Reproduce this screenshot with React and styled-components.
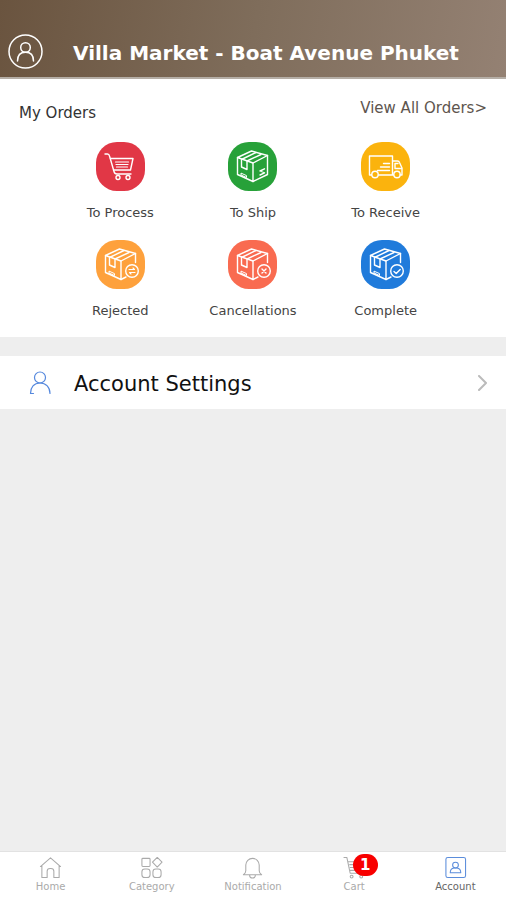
import styled, { createGlobalStyle } from "styled-components";

const GlobalStyle = createGlobalStyle`
  * {
    box-sizing: border-box;
  }

  body {
    margin: 0;
    background-color: #eee;
    font-family: "DejaVu Sans", Verdana, sans-serif;
  }

  button {
    font-family: inherit;
    border: none;
    background: none;
    padding: 0;
    cursor: pointer;
  }

  a {
    text-decoration: none;
  }
`;

const Page = styled.div`
  display: flex;
  flex-direction: column;
  min-height: 100vh;
`;

const Header = styled.header`
  display: flex;
  align-items: center;
  gap: 30px;
  padding: 34px 8px 8px;
  border-bottom: 2px solid #b5aea6;
  background: linear-gradient(100deg, #6a543f, #7f6d5b 50%, #948173);
`;

const Avatar = styled.span`
  display: flex;
  color: #fff;
`;

const Title = styled.h1`
  margin: 0;
  padding-top: 2px;
  font-size: 20px;
  line-height: 24px;
  white-space: nowrap;
  color: #fff;
`;

const Orders = styled.section`
  padding: 20px 19px 17px;
  background-color: #fff;
`;

const OrdersHeader = styled.div`
  display: flex;
  justify-content: space-between;
  align-items: flex-start;
  margin-bottom: 19px;
`;

const OrdersTitle = styled.h2`
  margin: 0;
  padding-top: 5px;
  font-size: 15px;
  font-weight: normal;
  line-height: 19px;
  color: #333;
`;

const OrdersLink = styled.a`
  font-size: 15px;
  line-height: 19px;
  color: #5e554e;
`;

const OrderGrid = styled.div`
  display: grid;
  grid-template-columns: repeat(3, 1fr);
  row-gap: 18px;
  padding: 0 35px;
`;

const OrderButton = styled.button`
  display: flex;
  flex-direction: column;
  align-items: center;
  gap: 13px;
  font-size: 13px;
  line-height: 18px;
  color: #444;
`;

const OrderIcon = styled.span`
  display: flex;
  justify-content: center;
  align-items: center;
  width: 49px;
  height: 49px;
  border-radius: 21px;
  background-color: ${(props) => props.$color};
`;

const SettingsRow = styled.button`
  display: flex;
  align-items: center;
  width: 100%;
  margin-top: 19px;
  padding: 12px 16px 12px 28px;
  background-color: #fff;
`;

const SettingsLabel = styled.span`
  flex: 1;
  margin-left: 22px;
  padding-top: 3px;
  font-size: 21px;
  line-height: 26px;
  text-align: left;
  color: #111;
`;

const NavBar = styled.nav`
  display: grid;
  grid-template-columns: repeat(5, 1fr);
  margin-top: auto;
  padding: 4px 0 6px;
  border-top: 1px solid #e2e2e2;
  background-color: #fff;
`;

const NavLink = styled.a`
  display: flex;
  flex-direction: column;
  align-items: center;
  gap: 1px;
  font-size: 10px;
  line-height: 14px;
  color: ${(props) => (props.$active ? "#666" : "#aaa")};
`;

const NavIcon = styled.span`
  position: relative;
  display: flex;
  color: ${(props) => (props.$active ? "#5b8ddb" : "#aaa")};
`;

const Badge = styled.span`
  position: absolute;
  top: -2px;
  left: 10px;
  width: 25px;
  border-radius: 11px;
  background-color: #f80000;
  color: #fff;
  font-size: 15px;
  font-weight: bold;
  line-height: 22px;
  text-align: center;
`;

function Icon({ size, box = size, stroke = 1, children }) {
  return (
    <svg
      width={size}
      height={size}
      viewBox={`0 0 ${box} ${box}`}
      fill="none"
      stroke="currentColor"
      strokeWidth={stroke}
      strokeLinecap="round"
      strokeLinejoin="round"
      aria-hidden="true"
    >
      {children}
    </svg>
  );
}

function OrderDrawing({ children }) {
  return (
    <Icon size={49} stroke={1.4}>
      <g stroke="#fff">{children}</g>
    </Icon>
  );
}

function CartDrawing() {
  return (
    <OrderDrawing>
      <path d="M9 12h2.500q1.500 0 2 2l4.500 15.500q.5 2.500 3 2.500h14" />
      <path d="M14.500 16.500h22.500l-2.500 11.500h-17" />
      <path d="M19.500 20h13M20 22.500h12M20.500 25h11" strokeWidth="1.200" />
      <circle cx="22" cy="35.500" r="2" />
      <circle cx="32" cy="35.500" r="2" />
    </OrderDrawing>
  );
}

function BoxDrawing({ mark, children }) {
  return (
    <OrderDrawing>
      <path d="M9.500 15.500l14-6.500 16 4.500-14.500 7.500z" />
      <path d="M9.500 15.500v17l15.500 7V21" />
      {mark ? (
        <path d="M39.500 13.500v9M25 39.500l5-2.500" />
      ) : (
        <path d="M39.500 13.500v19L25 39.500" />
      )}
      <path d="M13.500 17.500l14.500-7M19 19l14-6.500M13.500 17.500v7.500l5.500 2.500v-8.500" />
      <path d="M13 31.500v1.500l5.500 2.500v-1.500z" strokeWidth="1" />
      {mark && <circle cx="36" cy="31" r="6.300" />}
      {children}
    </OrderDrawing>
  );
}

function TruckDrawing() {
  return (
    <OrderDrawing>
      <path d="M10.500 33H8.500V14h23v19H17.500M31.500 19h5q1.500 0 2 1.500l2.500 5.500v7h-2M31.500 33h1" />
      <path d="M34 21.500v5h6.500M34 21.500h3" />
      <path d="M22.500 21.500h6M19.500 25h9M16.500 28.500h12" />
      <circle cx="14" cy="32.500" r="3.200" />
      <circle cx="36" cy="32.500" r="3.200" />
    </OrderDrawing>
  );
}

const orders = [
  { label: "To Process", color: "#e13746", drawing: <CartDrawing /> },
  {
    label: "To Ship",
    color: "#27a139",
    drawing: (
      <BoxDrawing>
        <path d="M32 29l4.500-2.200M32 33l4.500-2.200" />
        <path d="M33 29.500l3 1" strokeWidth="1" />
      </BoxDrawing>
    ),
  },
  { label: "To Receive", color: "#fbb30d", drawing: <TruckDrawing /> },
  {
    label: "Rejected",
    color: "#fea13c",
    drawing: (
      <BoxDrawing mark>
        <path
          d="M33 29.500h5.500l-1.500-1.500M39 32.500h-5.500l1.500 1.500"
          strokeWidth="1.100"
        />
      </BoxDrawing>
    ),
  },
  {
    label: "Cancellations",
    color: "#f96b50",
    drawing: (
      <BoxDrawing mark>
        <path d="M34 29l4 4M38 29l-4 4" />
      </BoxDrawing>
    ),
  },
  {
    label: "Complete",
    color: "#207bdb",
    drawing: (
      <BoxDrawing mark>
        <path d="M33 31.500l2.200 2 4-4" />
      </BoxDrawing>
    ),
  },
];

const navItems = [
  {
    label: "Home",
    drawing: (
      <path d="M1.500 11L12 2l10.500 9M3 10V22.500h5.500V16q0-3 3-3h1q3 0 3 3v6.500H21V10" />
    ),
  },
  {
    label: "Category",
    drawing: (
      <>
        <rect x="2" y="2.500" width="8.500" height="8.500" rx="1" />
        <path d="M18 1.500l5 5-5 5-5-5z" />
        <rect x="2" y="13.500" width="8.500" height="9" rx="3" />
        <rect x="13.500" y="13.500" width="8.500" height="9" rx="3" />
      </>
    ),
  },
  {
    label: "Notification",
    drawing: (
      <path d="M2.500 19.500q2.500-1.500 2.500-4V9.500a7 7 0 0 1 14 0v6q0 2.500 2.500 4zM9 20q0 3 3 3t3-3" />
    ),
  },
  {
    label: "Cart",
    badge: 1,
    drawing: (
      <>
        <path d="M1 1.500h3L7.500 18H21M5 6h17l-2.500 9H7M7 9h14M7.500 12h13" />
        <circle cx="9" cy="21.500" r="1.500" />
        <circle cx="19" cy="21.500" r="1.500" />
      </>
    ),
  },
  {
    label: "Account",
    active: true,
    drawing: (
      <>
        <rect x="2" y="1.500" width="20.500" height="21" rx="2" />
        <circle cx="12" cy="9.500" r="3" />
        <path d="M6.500 17.500q0-4.500 4-5h3q4 .5 4 5z" />
      </>
    ),
  },
];

function App() {
  return (
    <Page>
      <GlobalStyle />
      <Header>
        <Avatar>
          <Icon size={35} stroke={1.5}>
            <circle cx="17.500" cy="17.500" r="16.500" />
            <circle cx="17.500" cy="13.500" r="4.800" />
            <path d="M9.500 27c0-5.500 3-8.700 8-8.700s8 3.200 8 8.700" />
          </Icon>
        </Avatar>
        <Title>Villa Market - Boat Avenue Phuket</Title>
      </Header>
      <main>
        <Orders>
          <OrdersHeader>
            <OrdersTitle>My Orders</OrdersTitle>
            <OrdersLink href="#orders">View All Orders&gt;</OrdersLink>
          </OrdersHeader>
          <OrderGrid>
            {orders.map((order) => (
              <OrderButton key={order.label}>
                <OrderIcon $color={order.color}>{order.drawing}</OrderIcon>
                {order.label}
              </OrderButton>
            ))}
          </OrderGrid>
        </Orders>
        <SettingsRow>
          <Icon size={24} stroke={1.2}>
            <g stroke="#5588dd">
              <circle cx="12" cy="6.500" r="5.500" />
              <path d="M2.500 22.500h3M2.500 22.500c0-6.500 3.500-10.500 9.500-10.500s10 4 10 10.500" />
            </g>
          </Icon>
          <SettingsLabel>Account Settings</SettingsLabel>
          <Icon size={16} stroke={2}>
            <path d="M5 1l7 7-7 7" stroke="#bbb" />
          </Icon>
        </SettingsRow>
      </main>
      <NavBar>
        {navItems.map((item) => (
          <NavLink key={item.label} href="#" $active={item.active}>
            <NavIcon $active={item.active}>
              <Icon size={23} box={24} stroke={1.1}>
                {item.drawing}
              </Icon>
              {item.badge && <Badge>{item.badge}</Badge>}
            </NavIcon>
            {item.label}
          </NavLink>
        ))}
      </NavBar>
    </Page>
  );
}

export default App;
